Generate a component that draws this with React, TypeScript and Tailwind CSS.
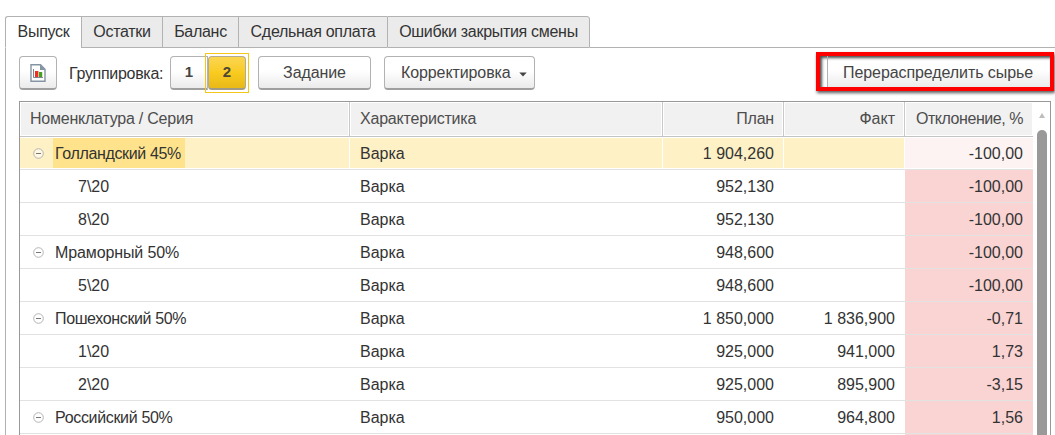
import type { ReactNode } from "react";

const tabs = [
  { label: "Выпуск", width: "w-[76px]" },
  { label: "Остатки", width: "w-[81px]" },
  { label: "Баланс", width: "w-[76px]" },
  { label: "Сдельная оплата", width: "w-[149px]" },
  { label: "Ошибки закрытия смены", width: "w-[203px]" },
];

const headers = [
  { title: "Номенклатура / Серия", tracking: "tracking-[-0.23px]" },
  { title: "Характеристика", tracking: "tracking-[-0.2px]" },
  { title: "План", tracking: "tracking-[-0.2px]" },
  { title: "Факт", tracking: "tracking-normal" },
  { title: "Отклонение, %", tracking: "tracking-[-0.45px]" },
];

type Row = { name: string; group?: boolean; tracking?: string; plan: string; fact: string; diff: string };

const rows: Row[] = [
  { name: "Голландский 45%", group: true, tracking: "tracking-[-0.35px]", plan: "1 904,260", fact: "", diff: "-100,00" },
  { name: "7\\20", plan: "952,130", fact: "", diff: "-100,00" },
  { name: "8\\20", plan: "952,130", fact: "", diff: "-100,00" },
  { name: "Мраморный 50%", group: true, tracking: "tracking-[-0.12px]", plan: "948,600", fact: "", diff: "-100,00" },
  { name: "5\\20", plan: "948,600", fact: "", diff: "-100,00" },
  { name: "Пошехонский 50%", group: true, tracking: "tracking-[-0.37px]", plan: "1 850,000", fact: "1 836,900", diff: "-0,71" },
  { name: "1\\20", plan: "925,000", fact: "941,000", diff: "1,73" },
  { name: "2\\20", plan: "925,000", fact: "895,900", diff: "-3,15" },
  { name: "Российский 50%", group: true, tracking: "tracking-[-0.33px]", plan: "950,000", fact: "964,800", diff: "1,56" },
];

const columns = "grid grid-cols-[330px_313px_121px_121px_128px]";

function Button({ className, children }: { className: string; children: ReactNode }) {
  return (
    <button
      className={`flex h-[34px] shrink-0 items-center rounded-[4px] border border-b-2 border-[#b2b2b2] border-b-[#a0a0a0] bg-linear-to-b from-white from-45% to-[#ebebeb] text-[#444] ${className}`}
    >
      {children}
    </button>
  );
}

function ReportIcon() {
  return (
    <svg width="16" height="18" viewBox="0 0 16 18" className="mt-px">
      <path d="M1 0.7H10.5L15 5.2V17.3H1Z" fill="#fff" stroke="#8494a3" strokeWidth="1.4" />
      <path d="M10 0.5L15.3 6H10Z" fill="#8494a3" />
      <path d="M3.5 5V13.5H13" fill="none" stroke="#7d8790" />
      <rect x="5" y="7" width="3.4" height="6" fill="#ee3124" />
      <rect x="9" y="8" width="3.2" height="5" fill="#43a01f" />
    </svg>
  );
}

function Collapse() {
  return (
    <svg width="11" height="11" viewBox="0 0 11 11" className="mr-[9px] ml-[13px] shrink-0">
      <circle cx="5.5" cy="5.5" r="4.8" fill="#fff" fillOpacity="0.5" stroke="#b4b4b4" />
      <path d="M3 5.5H8" stroke="#777" />
    </svg>
  );
}

function TableRow({ row, selected }: { row: Row; selected: boolean }) {
  const cell = selected ? "bg-[#fef1c5] border-r border-white" : "";
  const numberCell = `flex items-center justify-end pt-[2px] ${cell} ${selected ? "pr-[9px]" : "pr-[10px]"}`;
  return (
    <div
      className={`${columns} h-[33px] shrink-0 border-b border-[#e2e2e2] leading-[24px] whitespace-nowrap ${selected ? "py-px" : ""}`}
    >
      <div className={`flex items-center ${cell}`}>
        {row.group ? <Collapse /> : null}
        {row.group ? (
          <span
            className={`flex h-full items-center pt-[2px] pl-[2px] ${row.tracking} ${selected ? "w-[132px] bg-[#fee38c]" : ""}`}
          >
            {row.name}
          </span>
        ) : (
          <span className="pt-[2px] pl-[58px]">{row.name}</span>
        )}
      </div>
      <div className={`flex items-center pt-[2px] pl-[10px] ${cell}`}>Варка</div>
      <div className={numberCell}>{row.plan}</div>
      <div className={numberCell}>{row.fact}</div>
      <div
        className={`flex items-center justify-end pt-[2px] pr-[10px] ${selected ? "bg-[#fef3f3]" : "bg-[#fad4d3]"}`}
      >
        {row.diff}
      </div>
    </div>
  );
}

export default function App() {
  return (
    <div className="flex h-[435px] w-[1055px] flex-col overflow-hidden bg-white pt-[16px] pl-[5px] font-['Liberation_Sans',Arial,sans-serif] text-[16px] text-[#333]">
      <div className="flex h-[32px] shrink-0">
        {tabs.map((tab, i) => (
          <div
            key={tab.label}
            className={`flex shrink-0 items-center justify-center whitespace-nowrap border-y border-l border-[#b2b2b2] tracking-[-0.3px] ${tab.width} ${i === 0 ? "rounded-tl-[3px] border-b-white bg-white" : "bg-[#ebebeb]"} ${i === tabs.length - 1 ? "rounded-tr-[3px] border-r" : ""}`}
          >
            {tab.label}
          </div>
        ))}
        <div className="flex-1 border-b border-[#b2b2b2]" />
      </div>

      <div className="flex min-h-0 flex-1 flex-col border-l border-[#b2b2b2] pl-[13px]">
        <div className="flex h-[53px] shrink-0 items-start pt-[8px]">
          <Button className="w-[38px] justify-center">
            <ReportIcon />
          </Button>
          <span className="ml-[12px] w-[101px] shrink-0 leading-[36px] tracking-[-0.3px] whitespace-nowrap">
            Группировка:
          </span>
          <Button className="w-[38px] justify-center rounded-r-none text-[15px] font-bold">1</Button>
          <div className="-mt-[3px] -ml-[3px] flex h-[40px] w-[44px] shrink-0 items-center justify-center border border-[#f5c518]">
            <button className="flex h-[34px] w-[38px] items-center justify-center rounded-[4px] border border-b-2 border-[#b2ab94] border-b-[#a09a86] bg-linear-to-b from-[#fbd650] via-[#f9cb1f] to-[#e8b918] text-[15px] font-bold text-[#4c4638]">
              2
            </button>
          </div>
          <Button className="ml-[9px] w-[113px] justify-center tracking-[-0.1px]">Задание</Button>
          <Button className="ml-[13px] w-[151px] pl-[16px]">
            <span className="tracking-[-0.1px]">Корректировка</span>
            <svg width="8" height="5" viewBox="0 0 8 5" className="mt-[3px] ml-[8px]">
              <path d="M0.3 0.5H7.7L4 4.5Z" fill="#444" />
            </svg>
          </Button>
          <div className="-mt-[4px] ml-[281px] h-[39px] w-[238px] shrink-0 border-4 border-[#f00] shadow-[1px_2px_3px_rgba(0,0,0,0.65)]">
            <div className="flex h-full pl-[7px] shadow-[inset_2px_2px_3px_rgba(0,0,0,0.7)]">
              <div className="flex h-full flex-1 items-center border-l border-[#b2b2b2] bg-linear-to-b from-transparent from-45% to-[#ebebeb] pt-[3px] pl-[15px] tracking-[-0.08px] whitespace-nowrap text-[#444]">
                Перераспределить сырье
              </div>
            </div>
          </div>
        </div>

        <div className="flex min-h-0 w-[1032px] flex-1 border border-b-0 border-[#999]">
          <div className="flex w-[1013px] shrink-0 flex-col">
            <div className={`${columns} h-[35px] shrink-0 border-b border-[#c4c4c4] text-[#4d4d4d]`}>
              {headers.map(({ title, tracking }, i) => (
                <div key={title} className={`p-px ${i < 4 ? "border-r border-[#c9c9c9]" : ""}`}>
                  <div
                    className={`flex h-full items-center whitespace-nowrap bg-[#f1f1f1] ${tracking} ${i > 1 ? "justify-end" : "pl-[9px]"} ${i === 4 ? "pr-[9px]" : "pr-[8px]"}`}
                  >
                    {title}
                  </div>
                </div>
              ))}
            </div>
            {rows.map((row, i) => (
              <TableRow key={row.name} row={row} selected={i === 0} />
            ))}
            <div className={`${columns} h-[2px]`}>
              <div className="col-start-5 bg-[#fad4d3]" />
            </div>
          </div>
          <div className="flex flex-1 flex-col items-center pt-[11px]">
            <svg width="6" height="5" viewBox="0 0 6 5">
              <path d="M3 0L6 5H0Z" fill="#bdbdbd" />
            </svg>
            <div className="mt-[12px] w-[10px] flex-1 rounded-t-[5px] bg-[#999]" />
          </div>
        </div>
      </div>
    </div>
  );
}
